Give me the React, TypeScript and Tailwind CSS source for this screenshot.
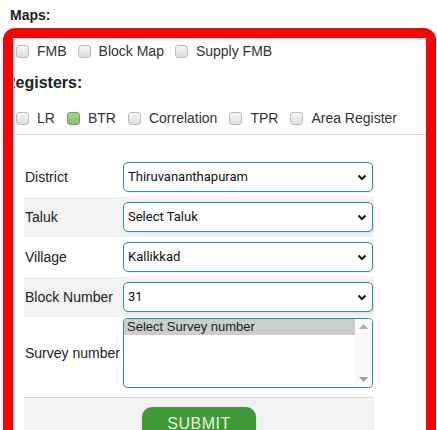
import { ReactNode } from "react";

function Check({ checked = false, label, gap }: { checked?: boolean; label: string; gap: string }) {
  return (
    <div className={`flex items-center ${gap}`}>
      <span
        className={
          checked
            ? "w-[13px] h-[13px] rounded-[3px] border border-[#6da55a] bg-gradient-to-b from-[#a6d68a] to-[#86c266]"
            : "w-[13px] h-[13px] rounded-[3px] border border-[#bdbdbd] bg-gradient-to-b from-[#f7f7f7] to-[#dedede]"
        }
      />
      <span className="ml-[8px]">{label}</span>
    </div>
  );
}

function Chevron() {
  return (
    <svg width="10" height="7" viewBox="0 0 10 7" className="shrink-0">
      <path d="M1.5 1.5 L5 5 L8.5 1.5" fill="none" stroke="#111" strokeWidth="2" />
    </svg>
  );
}

function Row({ label, gray, children }: { label: string; gray?: boolean; children: ReactNode }) {
  return (
    <div className={`flex h-[40px] pt-[5px] ${gray ? "bg-[#f2f2f2]" : "bg-white"}`}>
      <div className="w-[99px] pl-[1px] h-[30px] flex items-center text-[14px] text-[#222]">{label}</div>
      {children}
    </div>
  );
}

function Select({ value }: { value: string }) {
  return (
    <div className="w-[250px] h-[30px] rounded-[5px] border border-[#2e8b9f] bg-white flex items-center pl-[4px] pr-[5px] shadow-[1px_1px_2px_rgba(0,0,0,0.08)]">
      <span className="flex-1 font-['Roboto',sans-serif] text-[13px] text-[#111]">{value}</span>
      <Chevron />
    </div>
  );
}

export default function App() {
  return (
    <div className="w-[437px] h-[430px] overflow-hidden bg-white font-['Liberation_Sans',Arial,sans-serif] text-[#333]">
      <div className="h-[28px] pl-[10px] pt-[7px] text-[14px] font-bold leading-[16px] text-[#222]">Maps:</div>

      <div className="ml-[3px] w-[433px] h-[520px] rounded-[12px] border-[10px] border-[#ff0000]">
        <div className="h-full border-l border-t border-[#e2e2e2] overflow-hidden">
          {/* maps checkboxes */}
          <div className="flex items-center h-[25px] pl-[2px] text-[14px]">
            <Check label="FMB" gap="mr-[11px]" />
            <Check label="Block Map" gap="mr-[11px]" />
            <Check label="Supply FMB" gap="mr-[11px]" />
          </div>

          <div className="h-[38px] flex items-center -ml-[10px] text-[16px] font-bold text-[#222]">Registers:</div>

          <div className="flex items-center h-[33px] pl-[2px] text-[14px] border-b border-[#dedede]">
            <Check label="LR" gap="mr-[12px]" />
            <Check label="BTR" checked gap="mr-[12px]" />
            <Check label="Correlation" gap="mr-[12px]" />
            <Check label="TPR" gap="mr-[12px]" />
            <Check label="Area Register" gap="mr-[12px]" />
          </div>

          {/* form */}
          <div className="mt-[22px] ml-[10px] w-[350px]">
            <Row label="District">
              <Select value="Thiruvananthapuram" />
            </Row>
            <Row label="Taluk" gray>
              <Select value="Select Taluk" />
            </Row>
            <Row label="Village">
              <Select value="Kallikkad" />
            </Row>
            <Row label="Block Number" gray>
              <Select value="31" />
            </Row>

            <div className="flex h-[80px] pt-[1px]">
              <div className="w-[99px] pl-[1px] h-[70px] flex items-center text-[14px] text-[#222]">Survey number</div>
              <div className="w-[250px] h-[70px] rounded-[4px] border border-[#2e8b9f] bg-white flex overflow-hidden">
                <div className="flex-1">
                  <div className="h-[16px] bg-[#cdcdcd] pl-[3px] text-[13px] leading-[16px] text-[#222]">Select Survey number</div>
                </div>
                <div className="w-[17px] flex flex-col justify-between items-center py-[5px] bg-[#fafafa]">
                  <svg width="9" height="5" viewBox="0 0 9 5">
                    <path d="M0 5 L4.5 0 L9 5 Z" fill="#b0b0b0" />
                  </svg>
                  <svg width="9" height="5" viewBox="0 0 9 5">
                    <path d="M0 0 L4.5 5 L9 0 Z" fill="#a0a0a0" />
                  </svg>
                </div>
              </div>
            </div>

            <div className="border-t border-[#dcdcdc] bg-[#f2f2f2] h-[40px] pt-[9px] flex justify-center">
              <button className="w-[114px] h-[34px] rounded-[10px] bg-[#3d9a34] text-[16px] leading-[34px] tracking-[0.5px] text-[#e6f4e0] shadow-[0_1px_2px_rgba(0,0,0,0.2)]">
                SUBMIT
              </button>
            </div>
          </div>
        </div>
      </div>
    </div>
  );
}
